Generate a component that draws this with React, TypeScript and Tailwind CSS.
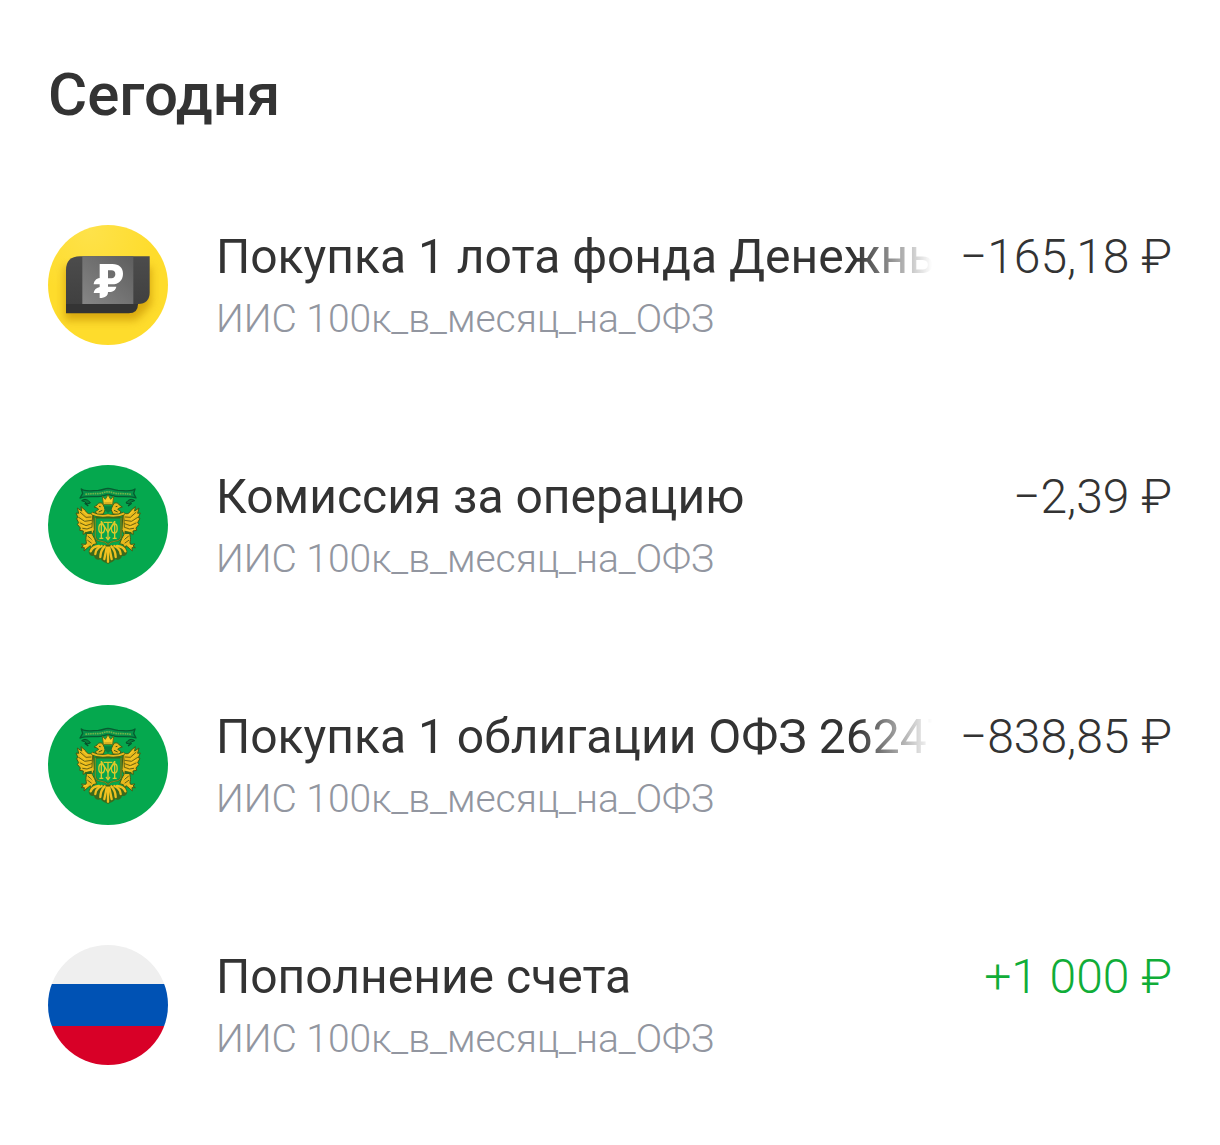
import React from 'react';

function FundIcon() {
  return (
    <svg viewBox="24 24 360 360" className="size-30 shrink-0" aria-hidden="true">
      <defs>
        <radialGradient id="fund-bg" cx="0.35" cy="0.05" r="0.55">
          <stop offset="0" stopColor="#fee24a" />
          <stop offset="1" stopColor="#fedc2c" />
        </radialGradient>
        <linearGradient id="fund-side" x1="0" y1="0" x2="0" y2="1">
          <stop offset="0" stopColor="#4c4c4c" />
          <stop offset="1" stopColor="#404040" />
        </linearGradient>
        <linearGradient id="fund-mid" x1="1" y1="0" x2="0" y2="1">
          <stop offset="0" stopColor="#5e5e5e" />
          <stop offset="1" stopColor="#868686" />
        </linearGradient>
        <filter id="fund-shadow" x="-20%" y="-20%" width="140%" height="150%">
          <feGaussianBlur stdDeviation="12" />
        </filter>
        <clipPath id="fund-clip">
          <circle cx="204" cy="204" r="180" />
        </clipPath>
      </defs>
      <circle cx="204" cy="204" r="180" fill="url(#fund-bg)" />
      <g clipPath="url(#fund-clip)">
        <path d="M74 150H334V262L288 310H74Z" fill="#c48d00" opacity="0.65" filter="url(#fund-shadow)" />
        <path d="M78 240H294V262Q294 289 266 289H78Z" fill="#343434" />
        <path d="M78 160Q78 118 120 118H329V226Q329 261 294 261H78Z" fill="url(#fund-side)" />
        <path d="M127 118H280V261H127Z" fill="url(#fund-mid)" />
        <path
          d="M179 141H217C238 141 249 153 249 170C249 190 236 202 216 202H204V209H229C227 219 219 225 208 225H204C204 236 197 243 179 243V228H161C162 219 167 213 179 210V202H161C162 193 168 184 179 183ZM204 160V184H214C222 184 226 179 226 172C226 164 222 160 214 160Z"
          fill="#fff"
          fillRule="evenodd"
        />
      </g>
    </svg>
  );
}

function Wing() {
  return (
    <g>
      <path
        d="M160 167C148 173 141 170 136 160L123 149L125 162L112 153L116 169L108 168L114 182L109 184L116 197L112 202L121 213L119 220L130 222L129 232L140 228L138 241C136 251 142 257 137 262L124 261L130 267L123 272L133 272L132 282L141 274L151 266L154 274L159 263L170 260L164 245L157 232L163 218Z"
        fill="#e9b91c"
        stroke="#3f5e17"
        strokeWidth="3"
        strokeLinejoin="round"
      />
      <g fill="none" stroke="#6b6412" strokeWidth="3" strokeLinecap="round">
        <path d="M121 166L138 181L153 180" />
        <path d="M116 181L134 193L155 190" />
        <path d="M121 198L138 206L155 200" />
        <path d="M128 214L141 216L155 211" />
      </g>
      <path d="M133 226L155 221L156 231L141 231Z" fill="#2c6a20" />
      <g fill="none" stroke="#5a6413" strokeWidth="3" strokeLinecap="round">
        <path d="M144 238L157 248M143 250L154 258" />
        <path d="M158 174L156 210" />
      </g>
      <g fill="none" stroke="#f8ce2b" strokeWidth="3" strokeLinecap="round">
        <path d="M130 163L143 174M120 174L137 187M120 189L137 199M126 206L142 211M139 222L151 219" />
        <path d="M150 238L160 250M132 267L142 265" />
      </g>
      <path
        d="M162 150L171 144C174 136 187 135 190 144L196 157L190 171L171 172L166 164L176 157L171 153Z"
        fill="#e9b91c"
        stroke="#3f5e17"
        strokeWidth="3"
        strokeLinejoin="round"
      />
      <path d="M177 148L182 149M176 165L187 160" fill="none" stroke="#455812" strokeWidth="3" />
      <path d="M125 131C133 124 145 127 151 138L141 141L134 134Z" fill="#087c3b" stroke="#064f29" strokeWidth="3" />
      <path d="M134 139L145 147" stroke="#064f29" strokeWidth="4" />
    </g>
  );
}

function TreasuryIcon() {
  return (
    <svg viewBox="24 24 360 360" className="size-30 shrink-0" aria-hidden="true">
      <circle cx="204" cy="204" r="180" fill="#05a84e" />
      <Wing />
      <g transform="matrix(-1 0 0 1 409 0)">
        <Wing />
      </g>
      <path
        d="M124 96C136 106 158 100 175 100C190 99 192 95 204 94C216 95 218 99 234 100C251 100 273 106 285 96L281 109L288 123C272 117 252 119 235 119C221 119 214 113 204 113C194 113 188 119 174 119C156 119 137 117 120 123L128 109Z"
        fill="#079149"
        stroke="#075c30"
        strokeWidth="4"
        strokeLinejoin="round"
      />
      <path d="M136 112C154 109 168 111 184 109C198 103 210 103 224 109C240 111 256 109 273 112" fill="none" stroke="#6fb548" strokeWidth="5" strokeDasharray="5 2" />
      <path d="M187 117L196 127L204 113L212 127L221 117L218 143H190Z" fill="#f8cc28" stroke="#55701a" strokeWidth="3" strokeLinejoin="round" />
      <path d="M193 138H215" stroke="#8f7a15" strokeWidth="2" />
      <path d="M191 148H217L214 160L204 168L194 160Z" fill="#0b7e3c" />
      <path
        d="M176 264H232C250 264 258 270 262 282C262 294 254 299 246 296C244 306 236 310 226 307C221 315 213 316 204 321C195 316 187 315 182 307C172 310 164 306 162 296C154 299 146 294 146 282C150 270 158 264 176 264Z"
        fill="#3a6a1c"
      />
      <g fill="none" stroke="#efc020" strokeWidth="7" strokeLinecap="round">
        <path d="M194 268Q182 280 181 300M214 268Q226 280 227 300" />
        <path d="M185 267Q167 275 166 291M223 267Q241 275 242 291" />
        <path d="M177 267Q157 268 152 283M231 267Q251 268 256 283" />
        <path d="M200 272L193 306M208 272L215 306" />
        <path d="M204 272V314" />
      </g>
      <path d="M155 169Q181 181 204 175Q227 181 253 169" fill="none" stroke="#3f6118" strokeWidth="10" />
      <path d="M155 169Q181 181 204 175Q227 181 253 169" fill="none" stroke="#e8b91c" strokeWidth="6" />
      <path
        d="M166 182H243V237Q243 250 228 252Q211 254 204 262Q197 254 180 252Q166 250 166 237Z"
        fill="#08a54d"
        stroke="#376a1d"
        strokeWidth="5"
      />
      <path d="M166 182V237Q166 250 180 252Q197 254 204 262Q211 254 228 252Q243 250 243 237V182" fill="none" stroke="#a9a424" strokeWidth="2" />
      <g fill="none" stroke="#dcc92b" strokeWidth="4">
        <path d="M184 192V243M224 192V243M204 196V246" />
        <path d="M184 193L204 226L224 193M191 196H217" />
        <path d="M184 201C174 201 174 228 184 228C195 228 199 208 184 201M224 201C234 201 234 228 224 228C213 228 209 208 224 201" />
        <path d="M178 244H190M218 244H230M198 240L204 248L210 240" />
      </g>
    </svg>
  );
}

function FlagIcon() {
  return (
    <span className="flex size-30 shrink-0 flex-col overflow-hidden rounded-full" aria-hidden="true">
      <span className="h-[39px] bg-[#efefef]" />
      <span className="h-[42px] bg-[#0052b4]" />
      <span className="h-[39px] bg-[#d80027]" />
    </span>
  );
}

type Operation = {
  icon: React.ReactNode;
  title: string;
  amount: string;
  income?: boolean;
};

const operations: Operation[] = [
  { icon: <FundIcon />, title: 'Покупка 1 лота фонда Денежны', amount: '−165,18 ₽' },
  { icon: <TreasuryIcon />, title: 'Комиссия за операцию', amount: '−2,39 ₽' },
  { icon: <TreasuryIcon />, title: 'Покупка 1 облигации ОФЗ 26247', amount: '−838,85 ₽' },
  { icon: <FlagIcon />, title: 'Пополнение счета', amount: '+1 000 ₽', income: true },
];

function OperationRow({ icon, title, amount, income }: Operation) {
  return (
    <li className="flex items-start gap-12">
      {icon}
      <div className="min-w-0 flex-1">
        <div className="flex gap-7 text-[48px] leading-[64px] whitespace-nowrap">
          <p className="min-w-0 flex-1 overflow-hidden text-[#333333] [mask-image:linear-gradient(to_right,#000_calc(100%-76px),transparent)]">
            {title}
          </p>
          <p className={income ? 'font-light text-[#10ad38]' : 'font-light text-[#333333]'}>{amount}</p>
        </div>
        <p className="truncate text-[39px] leading-[60px] font-light text-[#9296a0]">ИИС 100к_в_месяц_на_ОФЗ</p>
      </div>
    </li>
  );
}

export default function App() {
  return (
    <main className="min-h-screen bg-white px-12 pt-[59px] pb-20 font-[Roboto,sans-serif]">
      <h1 className="text-[60px] leading-[72px] font-medium text-[#333333]">Сегодня</h1>
      <ul className="mt-[94px] flex flex-col gap-[116px]">
        {operations.map((operation, index) => (
          <OperationRow key={index} {...operation} />
        ))}
      </ul>
    </main>
  );
}
